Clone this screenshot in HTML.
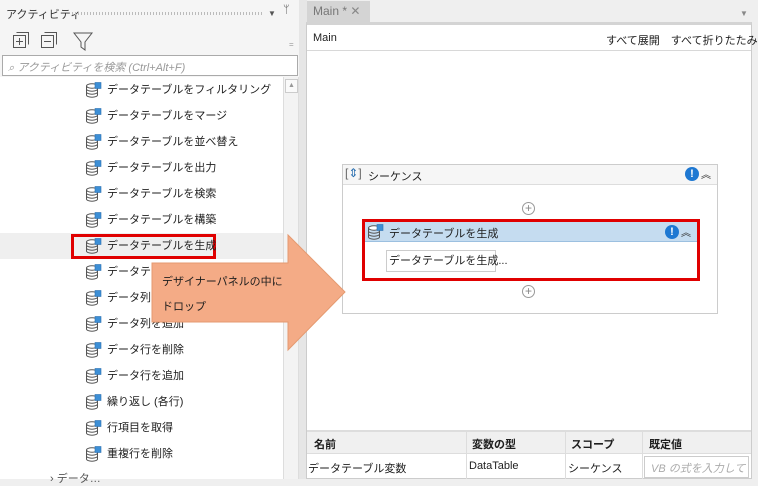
<!DOCTYPE html>
<html><head><meta charset="utf-8"><style>
*{margin:0;padding:0;box-sizing:border-box}
body{width:758px;height:479px;overflow:hidden;background:#efefef;font-family:"Liberation Sans","Noto Sans CJK JP",sans-serif;font-size:11px;color:#1e1e1e;position:relative}
.a{position:absolute;white-space:nowrap}
.item{position:absolute;left:85px;height:20px;line-height:20px;font-size:11px}
.item svg{position:absolute;left:0;top:2px}
.item span{position:absolute;left:22px;white-space:nowrap}
</style></head><body>
<div class="a" style="left:0;top:0;width:300px;height:479px;background:#f5f5f5"></div>
<div class="a" style="left:6px;top:6px;font-size:11px;color:#333">アクティビティ</div>
<div class="a" style="left:72px;top:12px;width:190px;height:3px;background:repeating-linear-gradient(90deg,#bbb 0 1px,transparent 1px 3px)"></div>
<div class="a" style="left:268px;top:9px;font-size:8px;color:#555">▼</div>
<div class="a" style="left:283px;top:4px;font-size:11px;color:#555">ᛘ</div>
<svg class="a" style="left:12px;top:31px" width="90" height="20">
<rect x="1.5" y="4.5" width="12" height="12" fill="none" stroke="#555"/><path d="M4.5 1.5h12v12" fill="none" stroke="#555"/><path d="M4 10.5h7M7.5 7v7" stroke="#555"/>
<rect x="29.5" y="4.5" width="12" height="12" fill="none" stroke="#555"/><path d="M32.5 1.5h12v12" fill="none" stroke="#555"/><path d="M32 10.5h7" stroke="#555"/>
<path d="M62 2h18l-7 9v8l-4-3v-5z" fill="none" stroke="#555"/>
</svg>
<div class="a" style="left:289px;top:40px;font-size:8px;color:#999">=</div>
<div class="a" style="left:2px;top:55px;width:296px;height:21px;background:#fff;border:1px solid #aaa"></div>
<div class="a" style="left:8px;top:59px;color:#999;font-style:italic;font-size:11px">⌕ アクティビティを検索 (Ctrl+Alt+F)</div>
<div class="a" style="left:0;top:77px;width:283px;height:402px;background:#fff"></div>
<div class="a" style="left:283px;top:77px;width:16px;height:402px;background:#f3f3f3;border-left:1px solid #ddd;border-right:1px solid #ddd"></div>
<div class="a" style="left:285px;top:79px;width:13px;height:14px;border:1px solid #ccc;background:#fafafa;font-size:7px;color:#999;text-align:center;line-height:12px">▲</div>
<div class="a" style="left:0;top:233px;width:283px;height:26px;background:#efefef"></div>
<div class="a" style="left:71px;top:234px;width:145px;height:25px;border:3px solid #e00000"></div>

<div id="list"></div>
<script>
var t=["データテーブルをフィルタリング","データテーブルをマージ","データテーブルを並べ替え","データテーブルを出力","データテーブルを検索","データテーブルを構築","データテーブルを生成","データテーブルを…","データ列を削除","データ列を追加","データ行を削除","データ行を追加","繰り返し (各行)","行項目を取得","重複行を削除"];
var ic='<svg width="18" height="17"><ellipse cx="7" cy="4" rx="5.5" ry="2.2" fill="#fff" stroke="#555"/><path d="M1.5 4v9c0 1.3 2.5 2.2 5.5 2.2s5.5-.9 5.5-2.2V4M1.5 7c0 1.3 2.5 2.2 5.5 2.2s5.5-.9 5.5-2.2M1.5 10c0 1.3 2.5 2.2 5.5 2.2s5.5-.9 5.5-2.2" fill="none" stroke="#555"/><rect x="10" y="0.5" width="6" height="6" fill="#3d8fd6" stroke="#2a6fb0" stroke-width=".6"/></svg>';
var h="";t.forEach(function(s,i){h+='<div class="item" style="top:'+(80+i*26)+'px">'+ic+'<span>'+s+'</span></div>'});
document.getElementById('list').innerHTML=h;
</script>
<div class="a" style="left:50px;top:470px;font-size:11px;color:#555">› データ…</div>

<div class="a" style="left:299px;top:0;width:8px;height:479px;background:#e6e6e6"></div>
<div class="a" style="left:307px;top:1px;width:63px;height:21px;background:#d4d4d4;color:#777;font-size:12px;line-height:21px;padding-left:6px">Main * <span style="color:#888">✕</span></div>
<div class="a" style="left:740px;top:9px;font-size:8px;color:#888">▼</div>
<div class="a" style="left:306px;top:22px;width:446px;height:457px;background:#fff;border:1px solid #ccc;border-top:3px solid #d4d4d4"></div>
<div class="a" style="left:313px;top:32px;font-size:11px">Main</div>
<div class="a" style="left:606px;top:32px;font-size:11px">すべて展開　すべて折りたたみ</div>
<div class="a" style="left:307px;top:50px;width:444px;height:1px;background:#d8d8d8"></div>

<div class="a" style="left:342px;top:164px;width:376px;height:150px;border:1px solid #ccc;background:#fff"></div>
<div class="a" style="left:343px;top:165px;width:374px;height:20px;background:#f6f6f6;border-bottom:1px solid #ddd"></div>
<div class="a" style="left:345px;top:166px;font-size:12px;color:#666">[<span style="color:#2a6fb0">⇕</span>]</div>
<div class="a" style="left:368px;top:168px;font-size:11px">シーケンス</div>
<div class="a" style="left:685px;top:167px;width:14px;height:14px;border-radius:50%;background:#1e78d2;color:#fff;font-size:11px;font-weight:bold;text-align:center;line-height:14px">!</div>
<div class="a" style="left:701px;top:166px;font-size:10px;color:#333">︽</div>
<div class="a" style="left:522px;top:202px;width:13px;height:13px;border:1px solid #999;border-radius:50%;color:#888;font-size:12px;line-height:11px;text-align:center">+</div>
<div class="a" style="left:522px;top:285px;width:13px;height:13px;border:1px solid #999;border-radius:50%;color:#888;font-size:12px;line-height:11px;text-align:center">+</div>
<div class="a" style="left:362px;top:219px;width:338px;height:62px;border:3px solid #e00000;background:#fff"></div>
<div class="a" style="left:365px;top:222px;width:332px;height:20px;background:#c5dcf0;border-bottom:1px solid #9cc0e0"></div>
<div class="a" style="left:367px;top:224px" id="ic2"></div>
<script>document.getElementById('ic2').innerHTML=ic;</script>
<div class="a" style="left:389px;top:225px;font-size:11px">データテーブルを生成</div>
<div class="a" style="left:665px;top:225px;width:14px;height:14px;border-radius:50%;background:#1e78d2;color:#fff;font-size:11px;font-weight:bold;text-align:center;line-height:14px">!</div>
<div class="a" style="left:681px;top:224px;font-size:10px;color:#333">︽</div>
<div class="a" style="left:386px;top:250px;width:110px;height:22px;border:1px solid #ccc;font-size:11px;line-height:20px;padding-left:2px">データテーブルを生成...</div>

<svg class="a" style="left:150px;top:233px" width="200" height="120"><path d="M2 30H138V2L195 59L138 117V89H2Z" fill="#f4ab86" stroke="#e59a70" stroke-width="1"/></svg>
<div class="a" style="left:162px;top:273px;font-size:11px">デザイナーパネルの中に</div>
<div class="a" style="left:162px;top:298px;font-size:11px">ドロップ</div>

<div class="a" style="left:307px;top:430px;width:444px;height:49px;border-top:2px solid #ddd"></div>
<div class="a" style="left:307px;top:432px;width:444px;height:22px;background:#f0f0f0;border-bottom:1px solid #ddd"></div>
<div class="a" style="left:466px;top:432px;width:1px;height:47px;background:#ddd"></div>
<div class="a" style="left:565px;top:432px;width:1px;height:47px;background:#ddd"></div>
<div class="a" style="left:642px;top:432px;width:1px;height:47px;background:#ddd"></div>
<div class="a" style="left:314px;top:436px;font-weight:bold;font-size:11px">名前</div>
<div class="a" style="left:472px;top:436px;font-weight:bold;font-size:11px">変数の型</div>
<div class="a" style="left:571px;top:436px;font-weight:bold;font-size:11px">スコープ</div>
<div class="a" style="left:649px;top:436px;font-weight:bold;font-size:11px">既定値</div>
<div class="a" style="left:308px;top:460px;font-size:11px">データテーブル変数</div>
<div class="a" style="left:469px;top:460px;font-size:11px">DataTable</div>
<div class="a" style="left:568px;top:460px;font-size:11px">シーケンス</div>
<div class="a" style="left:644px;top:456px;width:105px;height:22px;border:1px solid #ccc;overflow:hidden;color:#aaa;font-style:italic;font-size:11px;padding:3px 0 0 6px">VB の式を入力してください</div>
</body></html>
